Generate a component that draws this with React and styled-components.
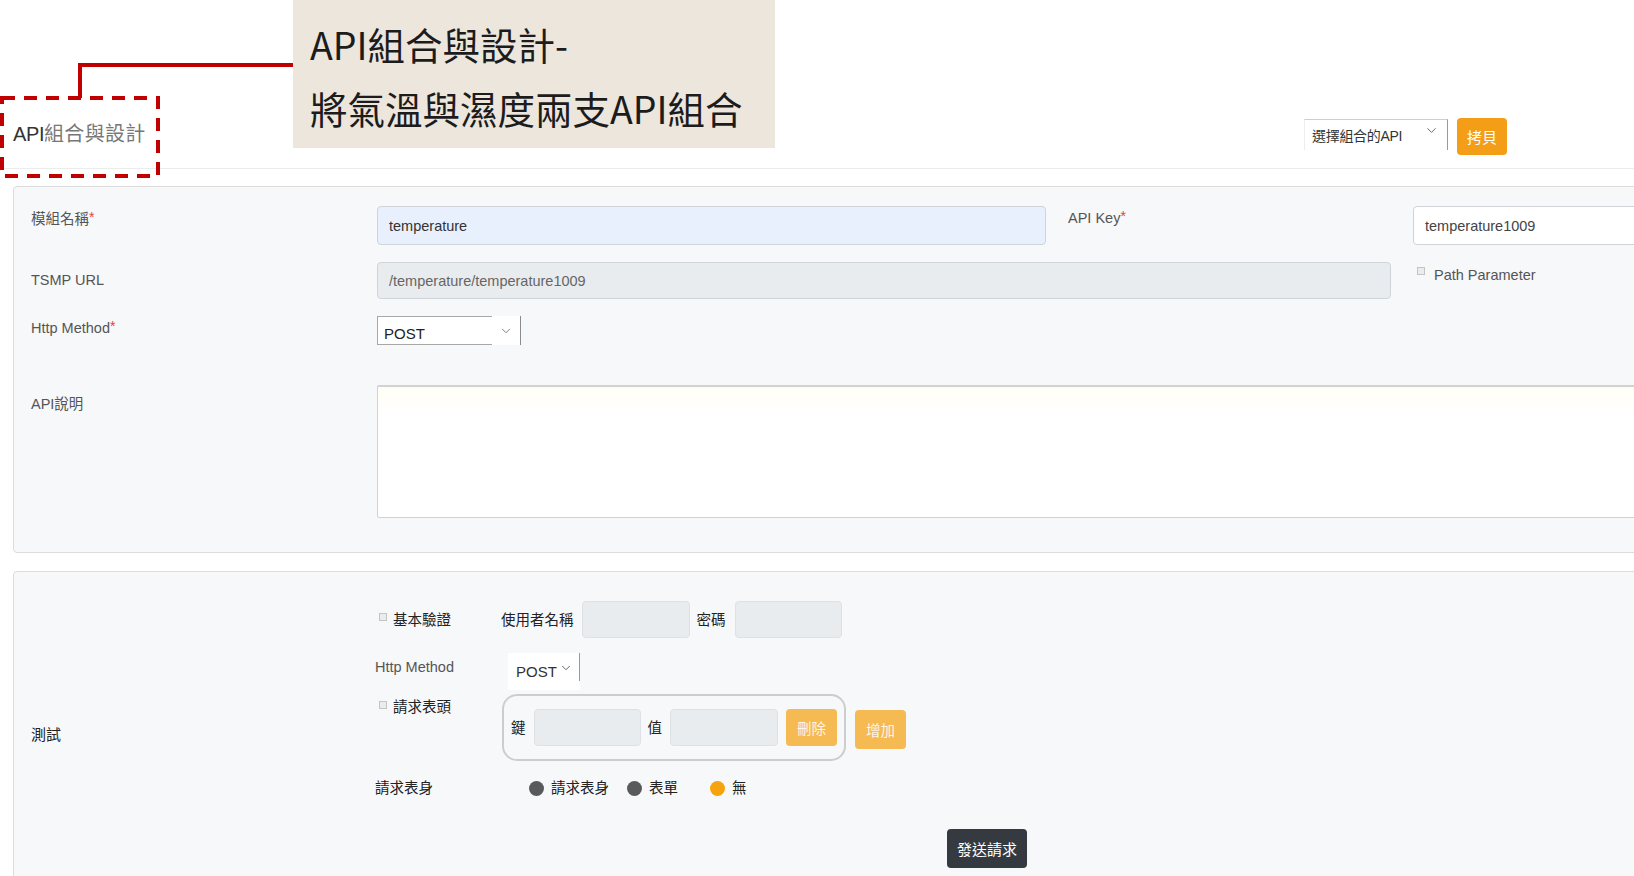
import React from "react";
import styled, { createGlobalStyle } from "styled-components";
import { ChevronDown } from "lucide-react";

const GlobalStyle = createGlobalStyle`
  html, body { margin: 0; padding: 0; background: #fff; overflow: hidden; }
  body { font-family: "Liberation Sans", "Noto Sans CJK TC", sans-serif; color: #333; }
  * { box-sizing: border-box; }
`;

const Page = styled.div`
  position: relative;
  width: 100%;
  height: 876px;
  overflow: hidden;
`;

/* ---------- header ---------- */
const Header = styled.header`
  display: flex;
  align-items: center;
  height: 169px;
  padding: 100px 127px 0 13px;
  border-bottom: 1px solid #ececec;
`;

const Title = styled.h1`
  flex: 1;
  margin: 0;
  font-size: 20px;
  font-weight: 400;
  line-height: 24px;
  color: #777;
  letter-spacing: 0.3px;
`;

const TitleStrong = styled.span`
  color: #333;
  letter-spacing: -0.4px;
`;

const HeaderSelect = styled.div`
  display: flex;
  align-items: center;
  justify-content: space-between;
  width: 144px;
  height: 31px;
  padding: 0 8px 0 7px;
  background: #fff;
  border-top: 1px solid #cfcfcf;
  border-left: 1px solid #ededed;
  border-right: 1px solid #9a9a9a;
  font-size: 14px;
  color: #333;
  letter-spacing: -0.3px;
`;

const HeaderCaret = styled.span`
  display: flex;
  margin-top: -8px;
  color: #555;
`;

const CopyButton = styled.button`
  margin: 4px 0 0 9px;
  width: 50px;
  height: 37px;
  border: none;
  border-radius: 4px;
  background: #f49d16;
  color: #fff;
  font-family: inherit;
  font-size: 15px;
  padding: 0;
`;

/* ---------- panels ---------- */
const Panel = styled.section`
  margin: ${(p) => p.$top}px 0 0 13px;
  width: 2100px;
  background: #f7f8fa;
  border: 1px solid #dcdcdc;
  border-radius: 4px;
  padding: ${(p) => p.$pad};
`;

const FormGrid = styled.div`
  display: grid;
  grid-template-columns: 324px 669px 323px 669px;
  column-gap: 22px;
  row-gap: 17px;
  align-items: start;
`;

const FieldLabel = styled.div`
  font-size: 14.5px;
  line-height: 20px;
  color: #555;
  padding-top: ${(p) => p.$pt || 0}px;
  margin-top: ${(p) => p.$mt || 0}px;
`;

const Req = styled.span`
  color: #e0433a;
  font-size: 14px;
  vertical-align: top;
  line-height: 16px;
`;

const TONES = {
  fill: { bg: "#e8f0fe", color: "#333" },
  plain: { bg: "#fff", color: "#444" },
  readonly: { bg: "#e9ecef", color: "#666" },
};

const TextField = styled.div`
  display: flex;
  align-items: center;
  height: ${(p) => p.$h}px;
  padding: 0 11px;
  border: 1px solid #cfd4da;
  border-radius: 4px;
  background: ${(p) => TONES[p.$tone].bg};
  color: ${(p) => TONES[p.$tone].color};
  font-size: 14.5px;
  grid-column: ${(p) => p.$span || "auto"};
`;

const PathParam = styled.label`
  display: flex;
  align-items: flex-start;
  padding-top: 3px;
  font-size: 14.5px;
  line-height: 20px;
  color: #555;
`;

const Check = styled.span`
  display: inline-block;
  flex: none;
  width: 8px;
  height: 8px;
  margin: ${(p) => p.$m};
  border: 1px solid #c4c4c4;
  background: #ececec;
`;

const MethodSelect = styled.div`
  display: flex;
  width: 144px;
  height: 29px;
`;

const MethodValue = styled.div`
  flex: 1;
  display: flex;
  align-items: flex-end;
  padding: 0 0 2px 6px;
  background: #fff;
  border: 1px solid #a8a8a8;
  border-right: none;
  font-size: 15px;
  color: #222;
`;

const MethodCaret = styled.div`
  width: 29px;
  display: flex;
  align-items: center;
  justify-content: center;
  background: #fff;
  border-right: 1px solid #8c8c8c;
  color: #666;
`;

const DescArea = styled.div`
  grid-column: 2 / span 3;
  height: 133px;
  margin-top: 23px;
  background: linear-gradient(#fffef6, #fff 30px);
  border: 1px solid #d2d2d2;
  border-top-width: 2px;
  border-radius: 2px;
`;

/* ---------- test panel ---------- */
const TestGrid = styled.div`
  display: grid;
  grid-template-columns: 322px 1fr;
  column-gap: 22px;
`;

const TestLabel = styled.div`
  align-self: center;
  font-size: 15px;
  line-height: 20px;
  color: #222;
`;

const TestBody = styled.div`
  display: flex;
  flex-direction: column;
`;

const SubRow = styled.div`
  display: flex;
  align-items: ${(p) => p.$align || "center"};
  min-height: ${(p) => p.$h || 0}px;
  margin-top: ${(p) => p.$mt || 0}px;
  font-size: 14.5px;
  line-height: 20px;
  color: #222;
`;

const SubLabel = styled.div`
  display: flex;
  align-items: center;
  flex: none;
  width: ${(p) => p.$w}px;
  padding-top: ${(p) => p.$pt || 0}px;
  color: ${(p) => (p.$muted ? "#555" : "#222")};
`;

const InlineText = styled.span`
  margin: ${(p) => p.$m || "0"};
`;

const GrayBox = styled.div`
  flex: none;
  width: ${(p) => p.$w}px;
  height: 37px;
  background: #e9ecef;
  border: 1px solid #dde1e5;
  border-radius: 4px;
`;

const TestSelect = styled.div`
  display: flex;
  align-items: center;
  justify-content: space-between;
  width: 72px;
  height: 37px;
  margin-left: 7px;
  padding: 0 7px 0 8px;
  background: linear-gradient(#9a9a9a, #9a9a9a) right top / 1px 28px no-repeat, #fff;
  font-size: 15px;
  color: #333;
`;

const HeaderGroup = styled.div`
  display: flex;
  align-items: center;
  width: 344px;
  height: 67px;
  margin-left: 1px;
  padding: 0 7px;
  border: 2px solid #cdcdcd;
  border-radius: 15px;
`;

const SoftButton = styled.button`
  flex: none;
  width: 51px;
  height: ${(p) => p.$h}px;
  margin: ${(p) => p.$m || "0"};
  padding: 0;
  border: none;
  border-radius: 4px;
  background: #f5bb52;
  color: rgba(255, 255, 255, 0.88);
  font-family: inherit;
  font-size: 14.5px;
  align-self: center;
`;

const RadioItem = styled.label`
  display: flex;
  align-items: center;
  width: ${(p) => (p.$w ? `${p.$w}px` : "auto")};
`;

const Dot = styled.span`
  width: 15px;
  height: 15px;
  margin-right: 7px;
  border-radius: 50%;
  background: ${(p) => (p.$on ? "#f5a30f" : "#5a5a5a")};
`;

const SendButton = styled.button`
  width: 80px;
  height: 39px;
  margin-left: 572px;
  padding: 0;
  border: none;
  border-radius: 4px;
  background: #343a40;
  color: #fff;
  font-family: inherit;
  font-size: 15px;
`;

/* ---------- annotation overlay ---------- */
const Callout = styled.div`
  position: absolute;
  left: 293px;
  top: 0;
  width: 482px;
  height: 148px;
  padding: 12px 0 0 17px;
  background: #ece6dd;
  font-family: "Noto Sans CJK TC", sans-serif;
  font-size: 37.5px;
  line-height: 64px;
  color: #1c1c1c;
`;

const CalloutLine = styled.div`
  white-space: nowrap;
`;

const Connector = styled.div`
  position: absolute;
  left: 78px;
  top: 63px;
  width: 215px;
  height: 35px;
  border-top: 4px solid #c00000;
  border-left: 4px solid #c00000;
`;

const DashFrame = styled.svg`
  position: absolute;
  left: 0;
  top: 96px;
`;

export default function App() {
  return (
    <Page>
      <GlobalStyle />
      <Header>
        <Title>
          <TitleStrong>API</TitleStrong>組合與設計
        </Title>
        <HeaderSelect>
          <span>選擇組合的API</span>
          <HeaderCaret>
            <ChevronDown size={15} strokeWidth={1.4} />
          </HeaderCaret>
        </HeaderSelect>
        <CopyButton>拷貝</CopyButton>
      </Header>

      <Panel $top={17} $pad="19px 17px 34px 17px">
        <FormGrid>
          <FieldLabel $pt={3}>
            模組名稱<Req>*</Req>
          </FieldLabel>
          <TextField $h={39} $tone="fill">temperature</TextField>
          <FieldLabel $pt={2}>
            API Key<Req>*</Req>
          </FieldLabel>
          <TextField $h={39} $tone="plain">temperature1009</TextField>

          <FieldLabel $pt={8}>TSMP URL</FieldLabel>
          <TextField $h={37} $tone="readonly" $span="2 / span 2">
            /temperature/temperature1009
          </TextField>
          <PathParam>
            <Check $m="2px 9px 0 4px" />
            Path Parameter
          </PathParam>

          <FieldLabel $pt={2}>
            Http Method<Req>*</Req>
          </FieldLabel>
          <MethodSelect>
            <MethodValue>POST</MethodValue>
            <MethodCaret>
              <ChevronDown size={14} strokeWidth={1.4} />
            </MethodCaret>
          </MethodSelect>
          <div />
          <div />

          <FieldLabel $pt={9} $mt={23}>
            API說明
          </FieldLabel>
          <DescArea />
        </FormGrid>
      </Panel>

      <Panel $top={18} $pad="29px 17px 30px 17px">
        <TestGrid>
          <TestLabel>測試</TestLabel>
          <TestBody>
            <SubRow $h={37}>
              <SubLabel $w={126}>
                <Check $m="-5px 6px 0 4px" />
                基本驗證
              </SubLabel>
              <InlineText $m="0 8px 0 0">使用者名稱</InlineText>
              <GrayBox $w={108} />
              <InlineText $m="0 9px 0 7px">密碼</InlineText>
              <GrayBox $w={107} />
            </SubRow>

            <SubRow $h={37} $mt={15} $align="flex-start">
              <SubLabel $w={126} $pt={4} $muted>
                Http Method
              </SubLabel>
              <TestSelect>
                <span>POST</span>
                <HeaderCaret>
                  <ChevronDown size={14} strokeWidth={1.5} />
                </HeaderCaret>
              </TestSelect>
            </SubRow>

            <SubRow $mt={4} $align="flex-start">
              <SubLabel $w={126} $pt={3}>
                <Check $m="-4px 6px 0 4px" />
                請求表頭
              </SubLabel>
              <HeaderGroup>
                <InlineText $m="0 8px 0 0">鍵</InlineText>
                <GrayBox $w={107} />
                <InlineText $m="0 8px 0 7px">值</InlineText>
                <GrayBox $w={108} />
                <SoftButton $h={37} $m="0 0 0 8px">
                  刪除
                </SoftButton>
              </HeaderGroup>
              <SoftButton $h={39} $m="4px 0 0 9px">
                增加
              </SoftButton>
            </SubRow>

            <SubRow $mt={17} $h={20}>
              <SubLabel $w={154}>請求表身</SubLabel>
              <RadioItem $w={98}>
                <Dot />
                請求表身
              </RadioItem>
              <RadioItem $w={83}>
                <Dot />
                表單
              </RadioItem>
              <RadioItem>
                <Dot $on />
                無
              </RadioItem>
            </SubRow>

            <SubRow $mt={31}>
              <SendButton>發送請求</SendButton>
            </SubRow>
          </TestBody>
        </TestGrid>
      </Panel>

      <Callout>
        <CalloutLine>API組合與設計-</CalloutLine>
        <CalloutLine>將氣溫與濕度兩支API組合</CalloutLine>
      </Callout>
      <Connector />
      <DashFrame width="162" height="82" viewBox="0 0 162 82">
        <rect
          x="2"
          y="2"
          width="156"
          height="78"
          fill="none"
          stroke="#c00000"
          strokeWidth="4"
          strokeDasharray="13 9"
        />
      </DashFrame>
    </Page>
  );
}
